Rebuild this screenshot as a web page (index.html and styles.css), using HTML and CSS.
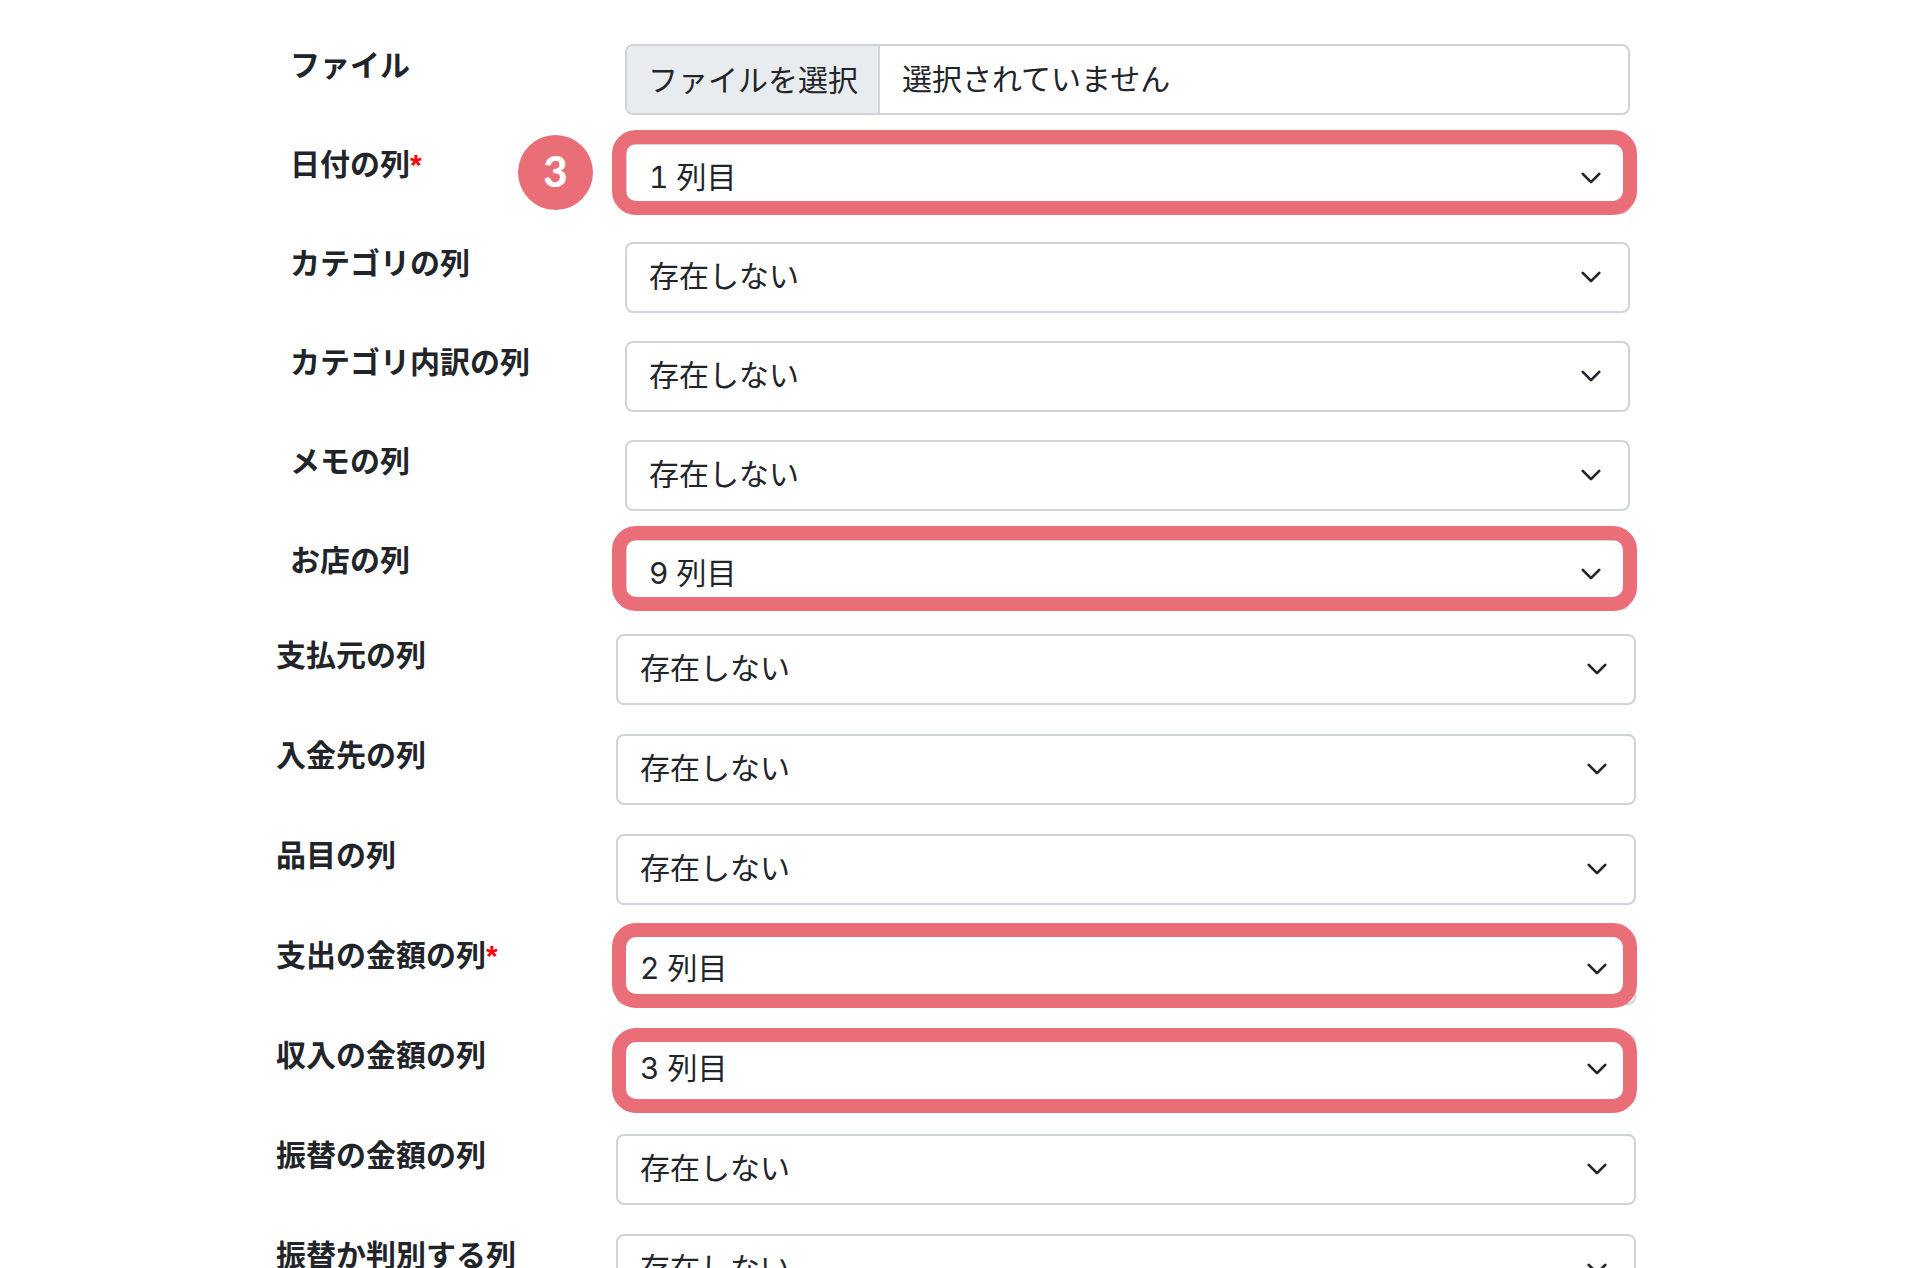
FILE: index.html
```html
<!DOCTYPE html>
<html lang="ja">

<head>
    <meta charset="UTF-8">
    <meta name="viewport" content="width=device-width, initial-scale=1.0">
    <title>CSVファイルの取り込み</title>
    <link rel="stylesheet" href="styles.css">
</head>

<body>
    <svg class="sprite" aria-hidden="true">
        <symbol id="chevron" viewBox="0 0 16 16">
            <path d="m2 5 6 6 6-6" fill="none" stroke="#212529" stroke-width="2" stroke-linecap="round" stroke-linejoin="round" />
        </symbol>
    </svg>
    <form class="import-form">
        <div class="group group-basic">
            <div class="row">
                <label for="file">ファイル</label>
                <div class="control file-box">
                    <input type="file" id="file" hidden>
                    <button type="button" id="fileBtn">ファイルを選択</button>
                    <span class="file-name">選択されていません</span>
                </div>
            </div>
            <div class="row">
                <label for="date">日付の列<span class="required">*</span></label>
                <div class="control highlight">
                    <span class="badge">3</span>
                    <select id="date"><option>1 列目</option></select>
                    <svg class="arrow"><use href="#chevron" /></svg>
                </div>
            </div>
            <div class="row">
                <label for="category">カテゴリの列</label>
                <div class="control">
                    <select id="category"><option>存在しない</option></select>
                    <svg class="arrow"><use href="#chevron" /></svg>
                </div>
            </div>
            <div class="row">
                <label for="subcategory">カテゴリ内訳の列</label>
                <div class="control">
                    <select id="subcategory"><option>存在しない</option></select>
                    <svg class="arrow"><use href="#chevron" /></svg>
                </div>
            </div>
            <div class="row">
                <label for="memo">メモの列</label>
                <div class="control">
                    <select id="memo"><option>存在しない</option></select>
                    <svg class="arrow"><use href="#chevron" /></svg>
                </div>
            </div>
            <div class="row">
                <label for="shop">お店の列</label>
                <div class="control highlight">
                    <select id="shop"><option>9 列目</option></select>
                    <svg class="arrow"><use href="#chevron" /></svg>
                </div>
            </div>
        </div>
        <div class="group group-money">
            <div class="row">
                <label for="from">支払元の列</label>
                <div class="control">
                    <select id="from"><option>存在しない</option></select>
                    <svg class="arrow"><use href="#chevron" /></svg>
                </div>
            </div>
            <div class="row">
                <label for="to">入金先の列</label>
                <div class="control">
                    <select id="to"><option>存在しない</option></select>
                    <svg class="arrow"><use href="#chevron" /></svg>
                </div>
            </div>
            <div class="row">
                <label for="item">品目の列</label>
                <div class="control">
                    <select id="item"><option>存在しない</option></select>
                    <svg class="arrow"><use href="#chevron" /></svg>
                </div>
            </div>
            <div class="row">
                <label for="expense">支出の金額の列<span class="required">*</span></label>
                <div class="control highlight">
                    <select id="expense"><option>2 列目</option></select>
                    <svg class="arrow"><use href="#chevron" /></svg>
                </div>
            </div>
            <div class="row">
                <label for="income">収入の金額の列</label>
                <div class="control highlight highlight-low">
                    <select id="income"><option>3 列目</option></select>
                    <svg class="arrow"><use href="#chevron" /></svg>
                </div>
            </div>
            <div class="row">
                <label for="transfer">振替の金額の列</label>
                <div class="control">
                    <select id="transfer"><option>存在しない</option></select>
                    <svg class="arrow"><use href="#chevron" /></svg>
                </div>
            </div>
            <div class="row">
                <label for="isTransfer">振替か判別する列</label>
                <div class="control">
                    <select id="isTransfer"><option>存在しない</option></select>
                    <svg class="arrow"><use href="#chevron" /></svg>
                </div>
            </div>
        </div>
    </form>
    <script>
        var file = document.querySelector('#file');
        var fileBtn = document.querySelector('#fileBtn');
        var fileName = document.querySelector('.file-name');
        //ボタンでファイル選択を開く
        fileBtn.addEventListener('click', function () {
            file.click();
        });
        //選んだファイル名を表示
        file.addEventListener('change', function () {
            fileName.textContent = file.files.length ? file.files[0].name : '選択されていません';
        });
    </script>
</body>

</html>
```
FILE: styles.css
```css
* {
    box-sizing: border-box;
    padding: 0;
    margin: 0;
}

body {
    height: 100vh;
    overflow: hidden;
    background-color: #fff;
    color: #212529;
    font-family: Inter, "Noto Sans CJK JP", sans-serif;
    font-size: 30px;
    font-variant-numeric: tabular-nums;
}

.sprite {
    display: none;
}

.import-form {
    padding-top: 44px;
}

.group {
    display: grid;
    margin: 0 auto;
}

.group-basic {
    gap: 28px;
    max-width: 1340px;
}

.group-money {
    gap: 29px;
    max-width: 1368px;
    margin-top: 24px;
    padding-right: 8px;
}

.row {
    display: grid;
    grid-template-columns: 1fr 3fr;
}

label {
    font-family: "Liberation Sans", "Noto Sans CJK JP", sans-serif;
    font-weight: bold;
    line-height: 44px;
}

.required {
    color: #f00;
}

.control {
    display: grid;
    position: relative;
    align-items: center;
    height: 71px;
}

select,
.file-box {
    width: 100%;
    height: 71px;
    border: 2px solid #ced4da;
    border-radius: 8px;
    background-color: #fff;
}

select {
    grid-area: 1 / 1;
    padding: 0 66px 3px 22px;
    color: inherit;
    font: inherit;
    font-variant-numeric: inherit;
    appearance: none;
}

.arrow {
    grid-area: 1 / 1;
    justify-self: end;
    width: 22px;
    height: 22px;
    margin: 0 28px 2px 0;
    pointer-events: none;
}

.file-box {
    display: flex;
    align-items: stretch;
    overflow: hidden;
}

.file-box button {
    padding: 0 20px 4px 21px;
    border: none;
    border-right: 2px solid #ced4da;
    background-color: #e9ecef;
    color: inherit;
    font: inherit;
}

.file-name {
    padding: 0 22px;
    line-height: 67px;
}

/* 注目させたい欄の赤枠 */
.highlight::after {
    content: "";
    position: absolute;
    top: -13px;
    right: -7px;
    bottom: -1px;
    left: -13px;
    border: 14px solid #ea6e77;
    border-radius: 24px;
    pointer-events: none;
}

.group-money .highlight::after {
    top: -11px;
    right: -1px;
    bottom: -3px;
    left: -4px;
}

.group-money .highlight-low::after {
    top: -6px;
    bottom: -8px;
}

.badge {
    position: absolute;
    top: -8px;
    left: -107px;
    width: 75px;
    height: 75px;
    border-radius: 50%;
    background-color: #ea6e77;
    color: #fff;
    font-family: Lato, sans-serif;
    font-size: 42px;
    font-weight: 900;
    line-height: 73px;
    text-align: center;
}
```
